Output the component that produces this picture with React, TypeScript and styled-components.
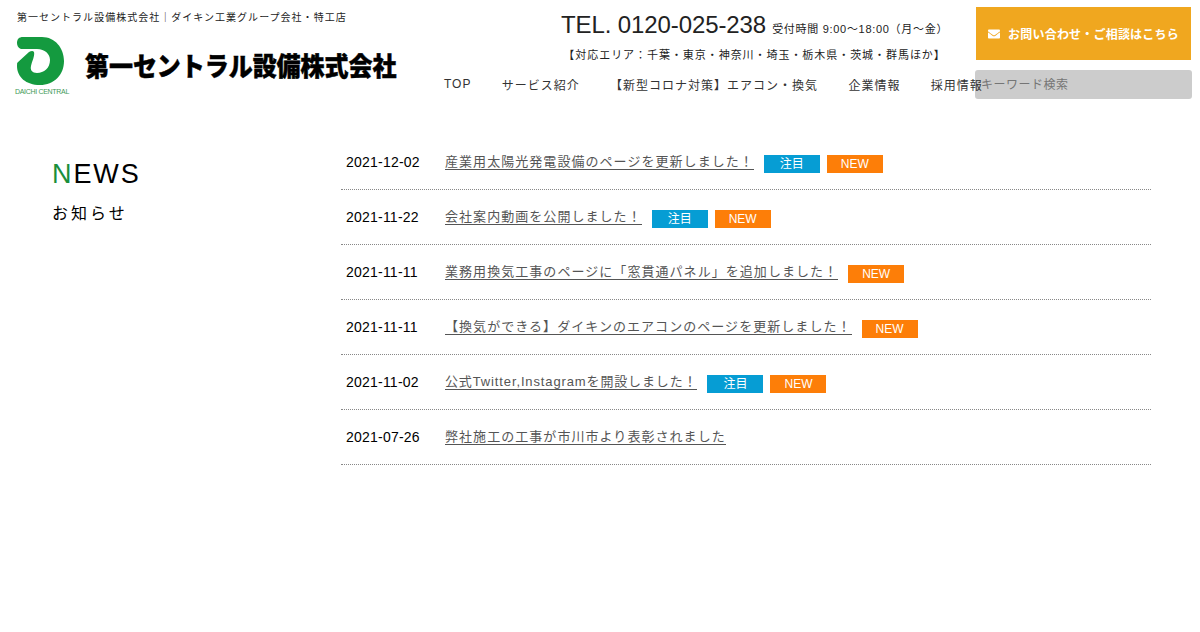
import { FaEnvelope } from "react-icons/fa";
import styled, { createGlobalStyle } from "styled-components";

const GlobalStyle = createGlobalStyle`
  html, body {
    margin: 0;
    padding: 0;
    background: #fff;
    font-family: "Liberation Sans", "Noto Sans CJK JP", sans-serif;
  }
`;

const Header = styled.header`
  display: grid;
  grid-template-columns: 444px 531px 225px;
  grid-template-rows: 70px 30px;
  height: 100px;
`;

const Brand = styled.div`
  grid-row: 1 / 3;
  padding: 11px 0 0 17px;
`;

const Tagline = styled.p`
  margin: 0;
  font-size: 10px;
  line-height: 14px;
  letter-spacing: 1.02px;
  color: #222;
  white-space: nowrap;
`;

const LogoRow = styled.div`
  display: flex;
  align-items: center;
  margin: 12px 0 0 -3px;
`;

const Mark = styled.div`
  display: flex;
  flex-direction: column;
  align-items: center;
  width: 56px;
  margin-right: 15px;
  svg {
    margin-right: 2px;
  }
`;

const MarkCaption = styled.span`
  font-size: 7px;
  line-height: 9px;
  letter-spacing: -0.3px;
  color: #3f9a57;
  white-space: nowrap;
`;

const Wordmark = styled.span`
  font-family: "Noto Sans CJK JP", sans-serif;
  font-weight: 900;
  font-size: 24px;
  line-height: 30px;
  letter-spacing: -0.05px;
  color: #000;
  white-space: nowrap;
  -webkit-text-stroke: 0.4px #000;
  transform: translateY(-2px) scaleY(1.1);
`;

const Contact = styled.div`
  display: flex;
  flex-direction: column;
  align-items: flex-start;
  padding: 10px 0 0 117px;
`;

const ContactInner = styled.div`
  text-align: center;
  white-space: nowrap;
`;

const Tel = styled.div`
  font-size: 24px;
  line-height: 30px;
  letter-spacing: -0.1px;
  color: #222;
`;

const Hours = styled.span`
  margin-left: 6px;
  font-size: 11px;
  letter-spacing: 0.7px;
`;

const Area = styled.div`
  margin-top: 3px;
  font-size: 11px;
  line-height: 16px;
  letter-spacing: 0.95px;
  color: #222;
`;

const Cta = styled.a`
  display: flex;
  align-items: center;
  justify-content: center;
  gap: 8px;
  width: 215px;
  height: 53px;
  margin: 7px 0 0 1px;
  background: #f0a71f;
  color: #fff;
  font-size: 12px;
  font-weight: 700;
  letter-spacing: 0.2px;
  white-space: nowrap;
`;

const Nav = styled.nav`
  position: relative;
  z-index: 1;
  display: flex;
  gap: 30.3px;
  align-items: center;
  height: 28px;
  white-space: nowrap;
`;

const NavItem = styled.a`
  font-size: 12px;
  letter-spacing: 1px;
  color: #333;
`;

const Search = styled.input`
  box-sizing: border-box;
  width: 217px;
  height: 29px;
  padding: 0 6px;
  border: 0;
  border-radius: 3px;
  background: #ccc;
  font: 12px "Liberation Sans", "Noto Sans CJK JP", sans-serif;
  letter-spacing: 0.5px;
  outline: none;
  &::placeholder {
    color: #757575;
    opacity: 1;
  }
`;

const Main = styled.main`
  display: flex;
  padding: 35px 49px 0 52px;
`;

const Heading = styled.div`
  width: 289px;
  flex-shrink: 0;
  padding-top: 22px;
`;

const Title = styled.h2`
  margin: 0;
  font-size: 27px;
  font-weight: 400;
  line-height: 34px;
  letter-spacing: 1.9px;
  color: #000;
`;

const Accent = styled.span`
  color: #1a8f3c;
`;

const Subtitle = styled.p`
  margin: 11px 0 0;
  font-size: 16px;
  line-height: 24px;
  letter-spacing: 3px;
  color: #000;
`;

const List = styled.ul`
  flex: 1;
  margin: 0;
  padding: 0;
  list-style: none;
`;

const Row = styled.li`
  display: flex;
  align-items: center;
  box-sizing: border-box;
  height: 55px;
  padding: 0 5px;
  border-bottom: 1px dotted #888;
`;

const Date = styled.time`
  width: 99px;
  flex-shrink: 0;
  font-size: 14px;
  letter-spacing: 0.22px;
  color: #000;
`;

const Link = styled.a<{ $tight?: boolean }>`
  border-bottom: 1px solid #555;
  font-size: 13px;
  line-height: 15px;
  letter-spacing: ${(p) => (p.$tight ? "0.87px" : "1.05px")};
  color: #555;
  white-space: nowrap;
`;

const Badge = styled.span<{ $color: string }>`
  width: 56px;
  height: 18px;
  margin: 4px 0 0 7px;
  background: ${(p) => p.$color};
  color: #fff;
  font-size: 12px;
  line-height: 19px;
  text-align: center;
  &:first-of-type {
    margin-left: 10px;
  }
`;

const news = [
  { date: "2021-12-02", title: "産業用太陽光発電設備のページを更新しました！", hot: true, fresh: true },
  { date: "2021-11-22", title: "会社案内動画を公開しました！", hot: true, fresh: true },
  { date: "2021-11-11", title: "業務用換気工事のページに「窓貫通パネル」を追加しました！", hot: false, fresh: true },
  { date: "2021-11-11", title: "【換気ができる】ダイキンのエアコンのページを更新しました！", hot: false, fresh: true },
  { date: "2021-11-02", title: "公式Twitter,Instagramを開設しました！", hot: true, fresh: true, tight: true },
  { date: "2021-07-26", title: "弊社施工の工事が市川市より表彰されました", hot: false, fresh: false },
];

const navItems = ["TOP", "サービス紹介", "【新型コロナ対策】エアコン・換気", "企業情報", "採用情報"];

export default function App() {
  return (
    <>
      <GlobalStyle />
      <Header>
        <Brand>
          <Tagline>第一セントラル設備株式会社｜ダイキン工業グループ会社・特工店</Tagline>
          <LogoRow>
            <Mark>
              <svg width="52" height="50" viewBox="0 0 52 50">
                <path
                  fill="#149a3f"
                  d="M8 0H27C40 0 49 11 49 24C49 38 39 48 25 48C11 48 2 40 2 29C2 23 3 18 6 12C3 11 2 8 2 6C2 2 4 0 8 0Z"
                />
                <path
                  fill="#fff"
                  d="M0 12H22C30 12 35 17 35 23C35 31 29 36 22 36C17 36 15 33 16 29C17 24 20 19 19 15C18 13.500 16 14 14 15L2 26H0Z"
                />
              </svg>
              <MarkCaption>DAICHI CENTRAL</MarkCaption>
            </Mark>
            <Wordmark>第一セントラル設備株式会社</Wordmark>
          </LogoRow>
        </Brand>
        <Contact>
          <ContactInner>
            <Tel>
              TEL. 0120-025-238<Hours>受付時間 9:00～18:00（月～金）</Hours>
            </Tel>
            <Area>【対応エリア：千葉・東京・神奈川・埼玉・栃木県・茨城・群馬ほか】</Area>
          </ContactInner>
        </Contact>
        <Cta>
          <FaEnvelope size={12} />
          お問い合わせ・ご相談はこちら
        </Cta>
        <Nav>
          {navItems.map((item) => (
            <NavItem key={item}>{item}</NavItem>
          ))}
        </Nav>
        <Search placeholder="キーワード検索" />
      </Header>
      <Main>
        <Heading>
          <Title>
            <Accent>N</Accent>EWS
          </Title>
          <Subtitle>お知らせ</Subtitle>
        </Heading>
        <List>
          {news.map((item) => (
            <Row key={item.title}>
              <Date>{item.date}</Date>
              <Link $tight={item.tight}>{item.title}</Link>
              {item.hot && <Badge $color="#069dd4">注目</Badge>}
              {item.fresh && <Badge $color="#fd7e08">NEW</Badge>}
            </Row>
          ))}
        </List>
      </Main>
    </>
  );
}
